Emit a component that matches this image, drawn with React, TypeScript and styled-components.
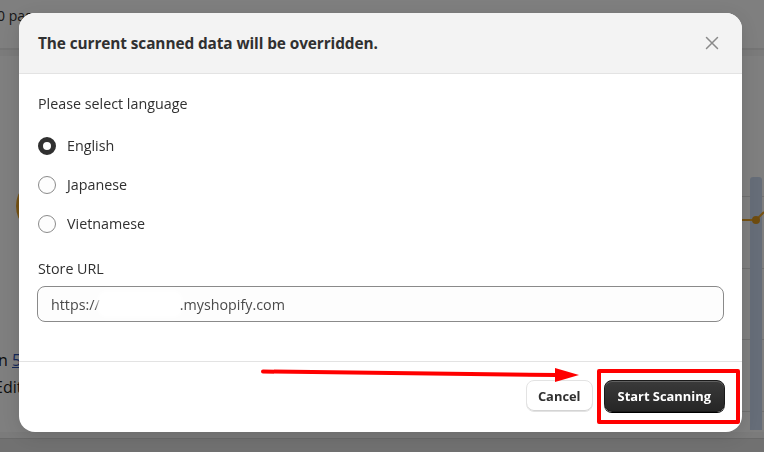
import React from "react";
import styled, { createGlobalStyle } from "styled-components";

const Global = createGlobalStyle`
  html, body { margin: 0; padding: 0; }
  body {
    width: 764px; height: 452px; overflow: hidden;
    background: #f1f1f1;
    font-family: "Open Sans", "Noto Sans", sans-serif;
    color: #303030;
  }
  * { box-sizing: border-box; }
`;

/* ---------- underlying page ---------- */
const Page = styled.div`
  width: 764px; height: 452px;
  display: flex; flex-direction: column;
  background: #f1f1f1;
`;
const TopBar = styled.div`
  height: 50px; flex: none;
  background: #fafafa;
  border-bottom: 2px solid #e6e6e6;
  display: flex; align-items: flex-start;
  padding: 6px 0 0 0;
  font-size: 14px; color: #303030;
  margin-left: -3px;
`;
const Main = styled.div`
  flex: 1; display: grid; grid-template-columns: 370px 1fr;
  gap: 20px; padding-top: 6px;
`;
const LeftCard = styled.div`
  background: #fafafa; border-radius: 0 0 10px 0;
  height: 376px; position: relative;
  display: flex; flex-direction: column; justify-content: flex-end;
  padding: 0 0 34px 0; gap: 5px;
  font-size: 16px; color: #1a1a1a;
  margin-left: -6px;
`;
const Disc = styled.div`
  position: absolute; left: 22px; top: 120px;
  width: 60px; height: 60px; border-radius: 50%;
  background: #e8a225;
`;
const LinkText = styled.span`
  color: #2a4fb0; text-decoration: underline;
`;
const RightCard = styled.div`
  background: #fafafa; height: 376px;
  display: flex; flex-direction: column; justify-content: flex-end;
  position: relative;
`;
const Grid = styled.div`
  position: absolute; inset: 0;
  display: flex; flex-direction: column; justify-content: space-between;
  padding: 140px 0 20px 0;
`;
const GridLine = styled.div`
  height: 1px; background: #dcdcdc;
`;
const ChartBar = styled.div`
  position: absolute; right: 2px; top: 121px; bottom: 2px; width: 12px;
  background: #c8d6ec; border-radius: 3px 3px 0 0;
`;
const ChartSvg = styled.svg`
  position: absolute; right: 0; top: 150px;
`;
const BottomStrip = styled.div`
  height: 14px; flex: none; background: #dedede;
  border-top: 1px solid #cfcfcf;
`;

/* ---------- overlay + modal ---------- */
const Backdrop = styled.div`
  position: fixed; inset: 0;
  background: rgba(0, 0, 0, 0.49);
  display: flex; justify-content: flex-start; align-items: flex-start;
  padding-top: 13px; padding-left: 19px;
`;
const Modal = styled.div`
  width: 723px; height: 419px;
  background: #ffffff; border-radius: 16px;
  overflow: hidden;
  display: flex; flex-direction: column;
  box-shadow: 0 4px 20px rgba(0,0,0,0.15);
  position: relative;
`;
const Header = styled.div`
  height: 61px; flex: none;
  background: #f3f3f3;
  border-bottom: 1px solid #e3e3e3;
  display: flex; align-items: center; justify-content: space-between;
  padding: 0 20px 0 19px;
`;
const Title = styled.h2`
  margin: 0; font-size: 15.4px; font-weight: 700; color: #303030;
  letter-spacing: -0.1px;
`;
const CloseBtn = styled.button`
  width: 20px; height: 20px; border: 0; background: transparent; padding: 0;
  display: flex; align-items: center; justify-content: center; cursor: pointer;
`;
const Body = styled.div`
  flex: 1;
  padding: 20px 18px 0 18px;
  display: flex; flex-direction: column;
`;
const Label = styled.div`
  font-size: 14.3px; line-height: 20px; color: #303030; padding-left: 1px;
`;
const RadioGroup = styled.div`
  display: flex; flex-direction: column;
  margin-top: 12px; margin-bottom: 16px;
`;
const RadioRow = styled.label`
  height: 39px; display: flex; align-items: center; gap: 11px;
  font-size: 14.3px; color: #303030; padding-left: 1px;
`;
const RadioDot = styled.span<{ $checked?: boolean }>`
  width: 18px; height: 18px; border-radius: 50%; flex: none;
  background: #fdfdfd;
  border: ${(p) => (p.$checked ? "5px solid #303030" : "1px solid #8a8a8a")};
`;
const Field = styled.div`
  margin-top: 7px;
  height: 36px; border: 1px solid #8a8a8a; border-radius: 8px;
  background: #fdfdfd;
  display: flex; align-items: center; padding: 0 13px;
  font-size: 14.3px; color: #4a4a4a;
`;
const Redacted = styled.span`
  display: inline-block; width: 80px; height: 22px;
  background: #ffffff; border-radius: 6px;
  box-shadow: 0 0 4px 2px #ffffff;
`;
const Footer = styled.div`
  height: 71px; flex: none;
  border-top: 1px solid #e3e3e3;
  display: flex; align-items: center; justify-content: flex-end; gap: 11px;
  padding: 0 17px 2px 0;
`;
const Button = styled.button<{ $primary?: boolean }>`
  height: 32px; border-radius: 8px; margin: 0;
  font-family: inherit; font-size: 12.9px; font-weight: 700;
  padding: ${(p) => (p.$primary ? "0 13px" : "0 11px")};
  cursor: pointer;
  color: ${(p) => (p.$primary ? "#ffffff" : "#303030")};
  background: ${(p) => (p.$primary ? "linear-gradient(#3a3a3a, #262626)" : "#ffffff")};
  border: ${(p) => (p.$primary ? "1px solid #1a1a1a" : "1px solid #e3e3e3")};
  box-shadow: ${(p) =>
    p.$primary
      ? "inset 0 1px 0 rgba(255,255,255,0.2), 0 1px 0 #000"
      : "inset 0 -1px 0 #d4d4d4"};
`;
const Highlight = styled.div`
  position: absolute; left: 578px; top: 356px;
  width: 143px; height: 55px;
  border: 4px solid #ff0000; border-radius: 2px;
  pointer-events: none;
`;
const ArrowSvg = styled.svg`
  position: absolute; left: 240px; top: 340px;
  pointer-events: none;
`;

export default function App() {
  return (
    <>
      <Global />
      <Page>
        <TopBar>0 pages</TopBar>
        <Main>
          <LeftCard>
            <Disc />
            <div>
              in <LinkText>5</LinkText>
            </div>
            <div>Edited</div>
          </LeftCard>
          <RightCard>
            <Grid>
              <GridLine />
              <GridLine />
              <GridLine />
              <GridLine />
            </Grid>
            <ChartBar />
            <ChartSvg width="30" height="30" viewBox="0 0 30 30">
              <polyline points="0,14 22,14 30,6" fill="none" stroke="#e8a225" strokeWidth="2" />
              <circle cx="22" cy="14" r="4" fill="#d8941c" />
            </ChartSvg>
          </RightCard>
        </Main>
        <BottomStrip />
      </Page>
      <Backdrop>
        <Modal>
          <Header>
            <Title>The current scanned data will be overridden.</Title>
            <CloseBtn aria-label="Close">
              <svg width="14" height="14" viewBox="0 0 14 14">
                <path d="M1.5 1.5 L12.5 12.5 M12.5 1.5 L1.5 12.5" stroke="#8a8a8a" strokeWidth="1.5" strokeLinecap="round" />
              </svg>
            </CloseBtn>
          </Header>
          <Body>
            <Label>Please select language</Label>
            <RadioGroup>
              <RadioRow>
                <RadioDot $checked />
                English
              </RadioRow>
              <RadioRow>
                <RadioDot />
                Japanese
              </RadioRow>
              <RadioRow>
                <RadioDot />
                Vietnamese
              </RadioRow>
            </RadioGroup>
            <Label>Store URL</Label>
            <Field>
              https://
              <Redacted />
              .myshopify.com
            </Field>
          </Body>
          <Footer>
            <Button>Cancel</Button>
            <Button $primary>Start Scanning</Button>
          </Footer>
          <Highlight />
          <ArrowSvg width="340" height="40" viewBox="0 0 340 40">
            <line x1="4" y1="18.5" x2="298" y2="22" stroke="#ff0000" strokeWidth="4" strokeLinecap="round" />
            <polygon points="296,15 320,22 296,29" fill="#ff0000" />
          </ArrowSvg>
        </Modal>
      </Backdrop>
    </>
  );
}
